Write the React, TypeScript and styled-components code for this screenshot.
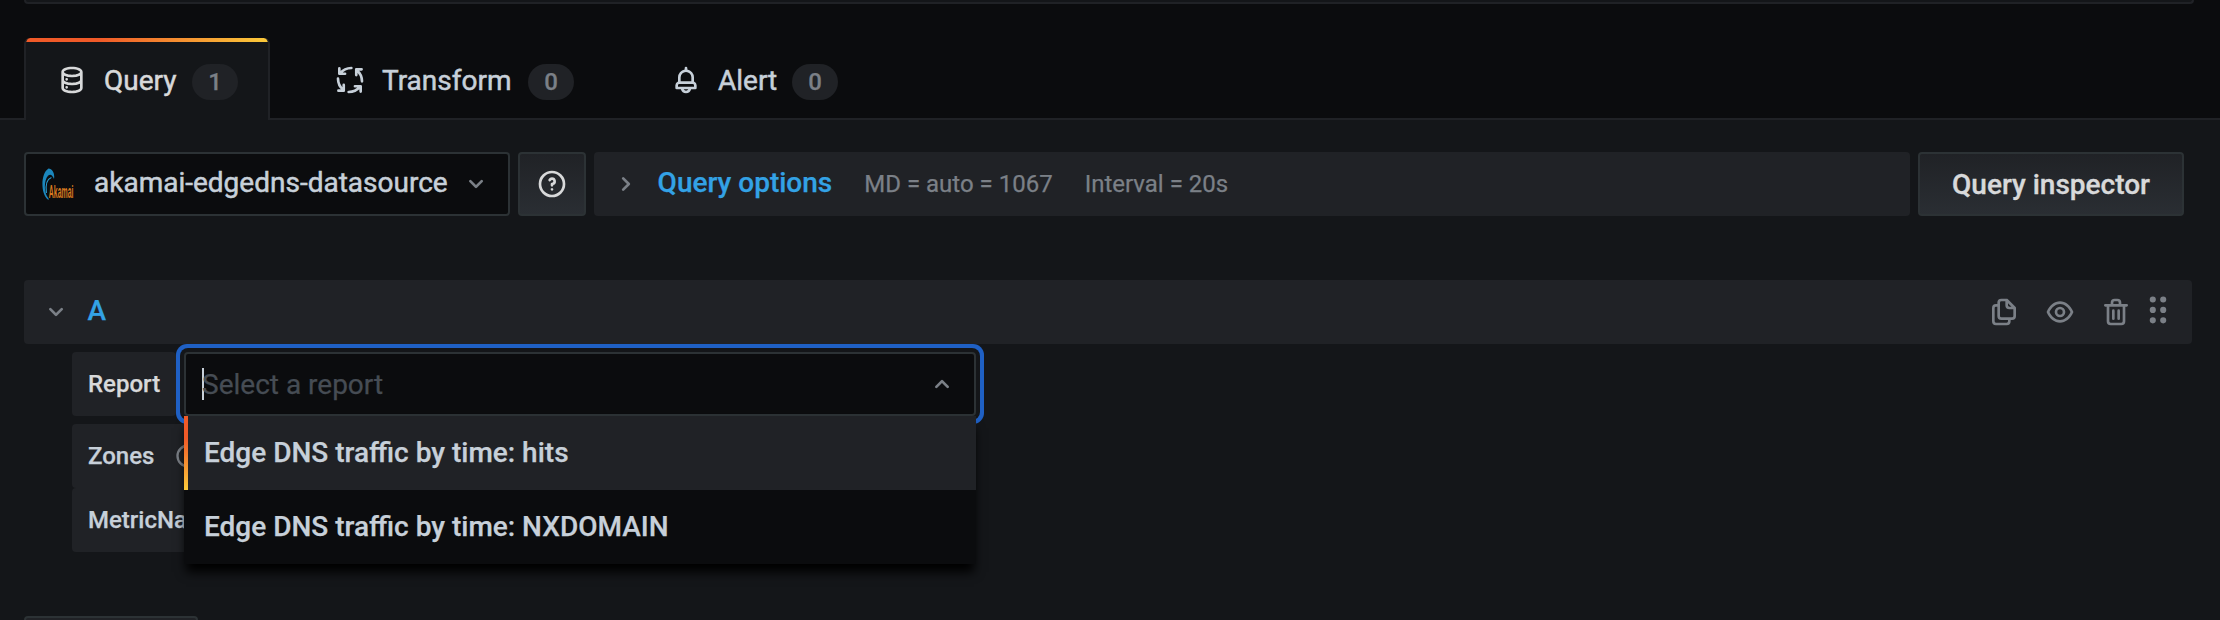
import React from "react";
import styled, { createGlobalStyle } from "styled-components";

const Global = createGlobalStyle`
  * { box-sizing: border-box; }
  body { margin: 0; background: #0b0c0e; font-family: Roboto, "Liberation Sans", sans-serif; color: #c7d0d9; -webkit-text-stroke: 0.25px currentColor; }
`;

const icons = {
  database:
    "M12,2C8,2,4,3.37,4,6V18c0,2.63,4,4,8,4s8-1.37,8-4V6C20,3.37,16,2,12,2Zm6,16c0,.71-2.28,2-6,2s-6-1.29-6-2V14.73A13.16,13.16,0,0,0,12,16a13.16,13.16,0,0,0,6-1.27Zm0-6c0,.71-2.28,2-6,2s-6-1.29-6-2V8.73A13.16,13.16,0,0,0,12,10a13.16,13.16,0,0,0,6-1.27ZM12,8C8.28,8,6,6.71,6,6s2.28-2,6-2,6,1.29,6,2S15.72,8,12,8ZM8,10.5a1,1,0,1,0,0,2a1,1,0,0,0,0-2ZM8,16.5a1,1,0,1,0,0,2a1,1,0,0,0,0-2Z",
  bell:
    "M18,13.18V10a6,6,0,0,0-5-5.91V3a1,1,0,0,0-2,0V4.09A6,6,0,0,0,6,10v3.18A3,3,0,0,0,4,16v2a1,1,0,0,0,1,1H8.14a4,4,0,0,0,7.72,0H19a1,1,0,0,0,1-1V16A3,3,0,0,0,18,13.18ZM8,10a4,4,0,0,1,8,0v3H8Zm4,10a2,2,0,0,1-1.72-1h3.44A2,2,0,0,1,12,20Zm6-3H6V16a1,1,0,0,1,1-1H17a1,1,0,0,1,1,1Z",
  question:
    "M11.29,15.29a1.58,1.58,0,0,0-.12.15.76.76,0,0,0-.09.18.64.64,0,0,0-.06.18,1.36,1.36,0,0,0,0,.2.84.84,0,0,0,.08.38.9.9,0,0,0,.54.54.94.94,0,0,0,.76,0,.9.9,0,0,0,.54-.54A1,1,0,0,0,13,16a1,1,0,0,0-.29-.71A1,1,0,0,0,11.29,15.29ZM12,2A10,10,0,1,0,22,12,10,10,0,0,0,12,2Zm0,18a8,8,0,1,1,8-8A8,8,0,0,1,12,20ZM12,7A3,3,0,0,0,9.4,8.5a1,1,0,1,0,1.73,1A1,1,0,0,1,12,9a1,1,0,0,1,0,2,1,1,0,0,0-1,1v1a1,1,0,0,0,2,0v-.18A3,3,0,0,0,12,7Z",
  copy:
    "M21,8.94a1.31,1.31,0,0,0-.06-.27l0-.09a1.07,1.07,0,0,0-.19-.28h0l-6-6h0a1.07,1.07,0,0,0-.28-.19.32.32,0,0,0-.09,0A.88.88,0,0,0,14.05,2H10A3,3,0,0,0,7,5V6H6A3,3,0,0,0,3,9V19a3,3,0,0,0,3,3h8a3,3,0,0,0,3-3V18h1a3,3,0,0,0,3-3V9S21,9,21,8.94ZM15,5.41,17.59,8H16a1,1,0,0,1-1-1ZM15,19a1,1,0,0,1-1,1H6a1,1,0,0,1-1-1V9A1,1,0,0,1,6,8H7v7a3,3,0,0,0,3,3h5Zm4-4a1,1,0,0,1-1,1H10a1,1,0,0,1-1-1V5a1,1,0,0,1,1-1h3V7a3,3,0,0,0,3,3h3Z",
  eye:
    "M21.92,11.6C19.9,6.91,16.1,4,12,4S4.1,6.91,2.08,11.6a1,1,0,0,0,0,.8C4.1,17.09,7.9,20,12,20s7.9-2.91,9.92-7.6A1,1,0,0,0,21.92,11.6ZM12,18c-3.17,0-6.17-2.29-7.9-6C5.83,8.29,8.83,6,12,6s6.17,2.29,7.9,6C18.17,15.71,15.17,18,12,18ZM12,8a4,4,0,1,0,4,4A4,4,0,0,0,12,8Zm0,6a2,2,0,1,1,2-2A2,2,0,0,1,12,14Z",
  trash:
    "M10,18a1,1,0,0,0,1-1V11a1,1,0,0,0-2,0v6A1,1,0,0,0,10,18ZM20,6H16V5a3,3,0,0,0-3-3H11A3,3,0,0,0,8,5V6H4A1,1,0,0,0,4,8H5V19a3,3,0,0,0,3,3h8a3,3,0,0,0,3-3V8h1a1,1,0,0,0,0-2ZM10,5a1,1,0,0,1,1-1h2a1,1,0,0,1,1,1V6H10Zm7,14a1,1,0,0,1-1,1H8a1,1,0,0,1-1-1V8H17Zm-3-1a1,1,0,0,0,1-1V11a1,1,0,0,0-2,0v6A1,1,0,0,0,14,18Z",
  down:
    "M17,9.17a1,1,0,0,0-1.41,0L12,12.71,8.46,9.17a1,1,0,0,0-1.41,0,1,1,0,0,0,0,1.42l4.24,4.24a1,1,0,0,0,1.42,0L17,10.59A1,1,0,0,0,17,9.17Z",
  up:
    "M17,13.41,12.71,9.17a1,1,0,0,0-1.42,0L7.05,13.41a1,1,0,0,0,0,1.42,1,1,0,0,0,1.41,0L12,11.29l3.54,3.54a1,1,0,0,0,.7.29,1,1,0,0,0,.71-.29A1,1,0,0,0,17,13.41Z",
  right:
    "M14.83,11.29,10.59,7.05a1,1,0,0,0-1.42,0,1,1,0,0,0,0,1.41L12.71,12,9.17,15.54a1,1,0,0,0,0,1.41,1,1,0,0,0,.71.29,1,1,0,0,0,.71-.29l4.24-4.24A1,1,0,0,0,14.83,11.29Z",
  drag:
    "M8.1,1.1a2.3,2.3,0,1,0,0,4.6a2.3,2.3,0,1,0,0-4.6ZM15.9,1.1a2.3,2.3,0,1,0,0,4.6a2.3,2.3,0,1,0,0-4.6ZM8.1,8.9a2.3,2.3,0,1,0,0,4.6a2.3,2.3,0,1,0,0-4.6ZM15.9,8.9a2.3,2.3,0,1,0,0,4.6a2.3,2.3,0,1,0,0-4.6ZM8.1,16.7a2.3,2.3,0,1,0,0,4.6a2.3,2.3,0,1,0,0-4.6ZM15.9,16.7a2.3,2.3,0,1,0,0,4.6a2.3,2.3,0,1,0,0-4.6Z",
};

const Svg = styled.svg<{ $size: number }>`
  display: block;
  flex: none;
  width: ${(p) => p.$size}px;
  height: ${(p) => p.$size}px;
`;

const Icon = ({ name, size = 32 }: { name: keyof typeof icons; size?: number }) => (
  <Svg $size={size} viewBox="0 0 24 24" fill="currentColor">
    <path d={icons[name]} />
  </Svg>
);

const ProcessIcon = () => (
  <Svg $size={32} viewBox="0 0 24 24" fill="none" stroke="currentColor" strokeWidth="2" strokeLinecap="round" strokeLinejoin="round">
    {[0, 90, 180, 270].map((angle) => (
      <path key={angle} transform={`rotate(${angle} 12 12)`} d="M4 3.3V7.3H8.3M4.7 6.9Q7.8 3.1 13 3" />
    ))}
  </Svg>
);

const LogoSvg = styled.svg`
  display: block;
  flex: none;
  width: 32px;
  height: 32px;
`;

const DataSourceLogo = () => (
  <LogoSvg viewBox="0 0 32 32">
    <path d="M6.5 2C-1.5 7-1.5 27 5.8 33.2C7 33.6 7.4 33 6 31.4C1.6 26 2 14 6 9.4C8.6 7 10.5 9 12 12.6C13 7 10.6 2.4 6.5 2Z" fill="#1b87bd" transform="translate(0 -1.6)" />
    <path d="M4.4 25C3.2 16 5 11 9.4 9.4" fill="none" stroke="#2a9fd4" strokeWidth="1.1" />
    <g transform="translate(6.8 30) scale(0.385 1)">
      <text fontFamily="Liberation Sans" fontSize="18" fontWeight="700" fill="#d8791f">
        Akamai
      </text>
    </g>
  </LogoSvg>
);

const Page = styled.div`
  width: 2220px;
  height: 620px;
  overflow: hidden;
  display: flex;
  flex-direction: column;
`;

const PanelEdge = styled.div`
  flex: none;
  height: 4px;
  margin: 0 26px 0 24px;
  background: #141619;
  border: 2px solid #202226;
  border-top: 0;
  border-radius: 0 0 6px 6px;
`;

const Tabs = styled.nav`
  flex: none;
  height: 116px;
  display: flex;
  align-items: flex-end;
  padding-left: 24px;
  box-shadow: inset 0 -2px #202226;
`;

const Tab = styled.div<{ $width: number; $pad: number; $active?: boolean }>`
  width: ${(p) => p.$width}px;
  height: 82px;
  padding: 2px 0 0 ${(p) => p.$pad}px;
  display: flex;
  align-items: center;
  font-size: 28px;
  color: ${(p) => (p.$active ? "#d8d9da" : "#c7d0d9")};
  ${(p) =>
    p.$active &&
    `
    background: linear-gradient(90deg, #f05a28 30%, #fbca3a 100%) 0 0 / 100% 4px no-repeat, #141619;
    border: 2px solid #202226;
    border-top: 0;
    border-bottom: 0;
    border-radius: 6px 6px 0 0;
  `}
`;

const TabText = styled.span<{ $width: number }>`
  width: ${(p) => p.$width}px;
  margin: 1px 0 0 16px;
  -webkit-text-stroke: 0.5px currentColor;
  white-space: nowrap;
`;

const Counter = styled.span`
  width: 46px;
  height: 36px;
  margin: 4px 0 0 16px;
  border-radius: 18px;
  background: #202226;
  color: #7b8087;
  font-size: 24px;
  font-weight: 500;
  line-height: 36px;
  text-align: center;
`;

const Content = styled.main`
  flex: 1;
  min-height: 0;
  background: #141619;
  padding: 32px 28px 0 24px;
  display: flex;
  flex-direction: column;
`;

const Toolbar = styled.div`
  flex: none;
  display: flex;
  gap: 8px;
  height: 64px;
  padding-right: 8px;
`;

const Picker = styled.div`
  width: 486px;
  display: flex;
  align-items: center;
  padding: 0 16px;
  background: #0b0c0e;
  border: 2px solid #2c3235;
  border-radius: 4px;
  font-size: 28px;
`;

const PickerName = styled.span`
  flex: 1;
  margin: -4px 0 0 20px;
  -webkit-text-stroke: 0.5px currentColor;
`;

const Chevron = styled.span`
  display: flex;
  color: #7b8087;
`;

const Button = styled.button<{ $width: number }>`
  width: ${(p) => p.$width}px;
  display: flex;
  align-items: center;
  justify-content: center;
  padding: 0;
  background: linear-gradient(180deg, #202226, #2a2e33);
  border: 2px solid #2c3235;
  border-radius: 4px;
  color: #d8d9da;
  font: 500 28px Roboto, sans-serif;
  -webkit-text-stroke: 0.35px currentColor;
`;

const Options = styled.div`
  flex: 1;
  display: flex;
  align-items: center;
  padding-left: 16px;
  background: #202226;
  border-radius: 4px;
`;

const Title = styled.span`
  color: #33a2e5;
  font-size: 28px;
  font-weight: 500;
  margin: -4px 0 0 15.6px;
`;

const Detail = styled.span<{ $gap: number }>`
  margin: -1px 0 0 ${(p) => p.$gap}px;
  color: #7b8087;
  font-size: 24px;
`;

const QueryHeader = styled.div`
  flex: none;
  height: 64px;
  margin-top: 64px;
  padding: 0 18px 0 16px;
  display: flex;
  align-items: center;
  background: #202226;
  border-radius: 4px;
  color: #7b8087;
`;

const Actions = styled.div`
  margin-left: auto;
  display: flex;
  align-items: center;
  gap: 24px;
`;

const DragHandle = styled.span`
  margin: -2px 0 0 -14px;
`;

const Form = styled.div`
  margin-left: 48px;
  padding-top: 8px;
`;

const Field = styled.div<{ $gap?: number }>`
  display: flex;
  gap: 8px;
  margin-bottom: ${(p) => p.$gap ?? 0}px;
`;

const Label = styled.label<{ $width: number; $focused?: boolean }>`
  width: ${(p) => p.$width}px;
  height: 64px;
  display: flex;
  align-items: center;
  gap: 20px;
  padding: 0 16px;
  background: #202226;
  border-radius: 4px;
  color: ${(p) => (p.$focused ? "#d8d9da" : "#c7d0d9")};
  font-size: 24px;
  font-weight: 500;
  white-space: nowrap;
`;

const Hint = styled.span`
  display: flex;
  color: #7b8087;
`;

const Select = styled.div`
  position: relative;
  width: 792px;
  height: 64px;
  display: flex;
  align-items: center;
  justify-content: space-between;
  padding: 0 16px;
  background: #0b0c0e;
  border: 2px solid #2c3235;
  border-radius: 4px;
  box-shadow: 0 0 0 4px #141619, 0 0 0 8px #1f60c4;
`;

const Placeholder = styled.span`
  display: flex;
  align-items: center;
  height: 32px;
  border-left: 2px solid #c7d0d9;
  color: #464c54;
  font-size: 28px;
  text-indent: -2px;
`;

const Menu = styled.div`
  position: absolute;
  z-index: 1;
  top: 62px;
  left: -2px;
  width: 792px;
  background: #0b0c0e;
  box-shadow: 0 10px 10px -2px #000;
`;

const Option = styled.div<{ $focused?: boolean }>`
  height: 74px;
  padding: 0 20px 2px;
  display: flex;
  align-items: center;
  font-size: 28px;
  font-weight: 500;
  background: ${(p) =>
    p.$focused ? "linear-gradient(180deg, #f05a28 30%, #fbca3a 100%) 0 0 / 4px 100% no-repeat, #202226" : "#0b0c0e"};
`;

const AddQuery = styled.div`
  flex: none;
  width: 174px;
  height: 64px;
  margin-top: 64px;
  background: #202226;
  border: 2px solid #2c3235;
  border-radius: 4px;
`;

export default function App() {
  return (
    <Page>
      <Global />
      <PanelEdge />
      <Tabs>
        <Tab $active $width={246} $pad={30}>
          <Icon name="database" />
          <TabText $width={72}>Query</TabText>
          <Counter>1</Counter>
        </Tab>
        <Tab $width={338} $pad={64}>
          <ProcessIcon />
          <TabText $width={130}>Transform</TabText>
          <Counter>0</Counter>
        </Tab>
        <Tab $width={300} $pad={62}>
          <Icon name="bell" />
          <TabText $width={58}>Alert</TabText>
          <Counter>0</Counter>
        </Tab>
      </Tabs>
      <Content>
        <Toolbar>
          <Picker>
            <DataSourceLogo />
            <PickerName>akamai-edgedns-datasource</PickerName>
            <Chevron><Icon name="down" /></Chevron>
          </Picker>
          <Button $width={68}><Icon name="question" /></Button>
          <Options>
            <Chevron><Icon name="right" /></Chevron>
            <Title>Query options</Title>
            <Detail $gap={32}>MD = auto = 1067</Detail>
            <Detail $gap={32}>Interval = 20s</Detail>
          </Options>
          <Button $width={266}>Query inspector</Button>
        </Toolbar>
        <QueryHeader>
          <Icon name="down" />
          <Title>A</Title>
          <Actions>
            <Icon name="copy" />
            <Icon name="eye" />
            <Icon name="trash" />
            <DragHandle><Icon name="drag" /></DragHandle>
          </Actions>
        </QueryHeader>
        <Form>
          <Field $gap={8}>
            <Label $width={104} $focused>Report</Label>
            <Select>
              <Placeholder>Select a report</Placeholder>
              <Chevron><Icon name="up" /></Chevron>
              <Menu>
                <Option $focused>Edge DNS traffic by time: hits</Option>
                <Option>Edge DNS traffic by time: NXDOMAIN</Option>
              </Menu>
            </Select>
          </Field>
          <Field>
            <Label $width={200}>
              Zones
              <Hint><Icon name="question" size={28} /></Hint>
            </Label>
          </Field>
          <Field>
            <Label $width={200}>MetricName</Label>
          </Field>
        </Form>
        <AddQuery />
      </Content>
    </Page>
  );
}
